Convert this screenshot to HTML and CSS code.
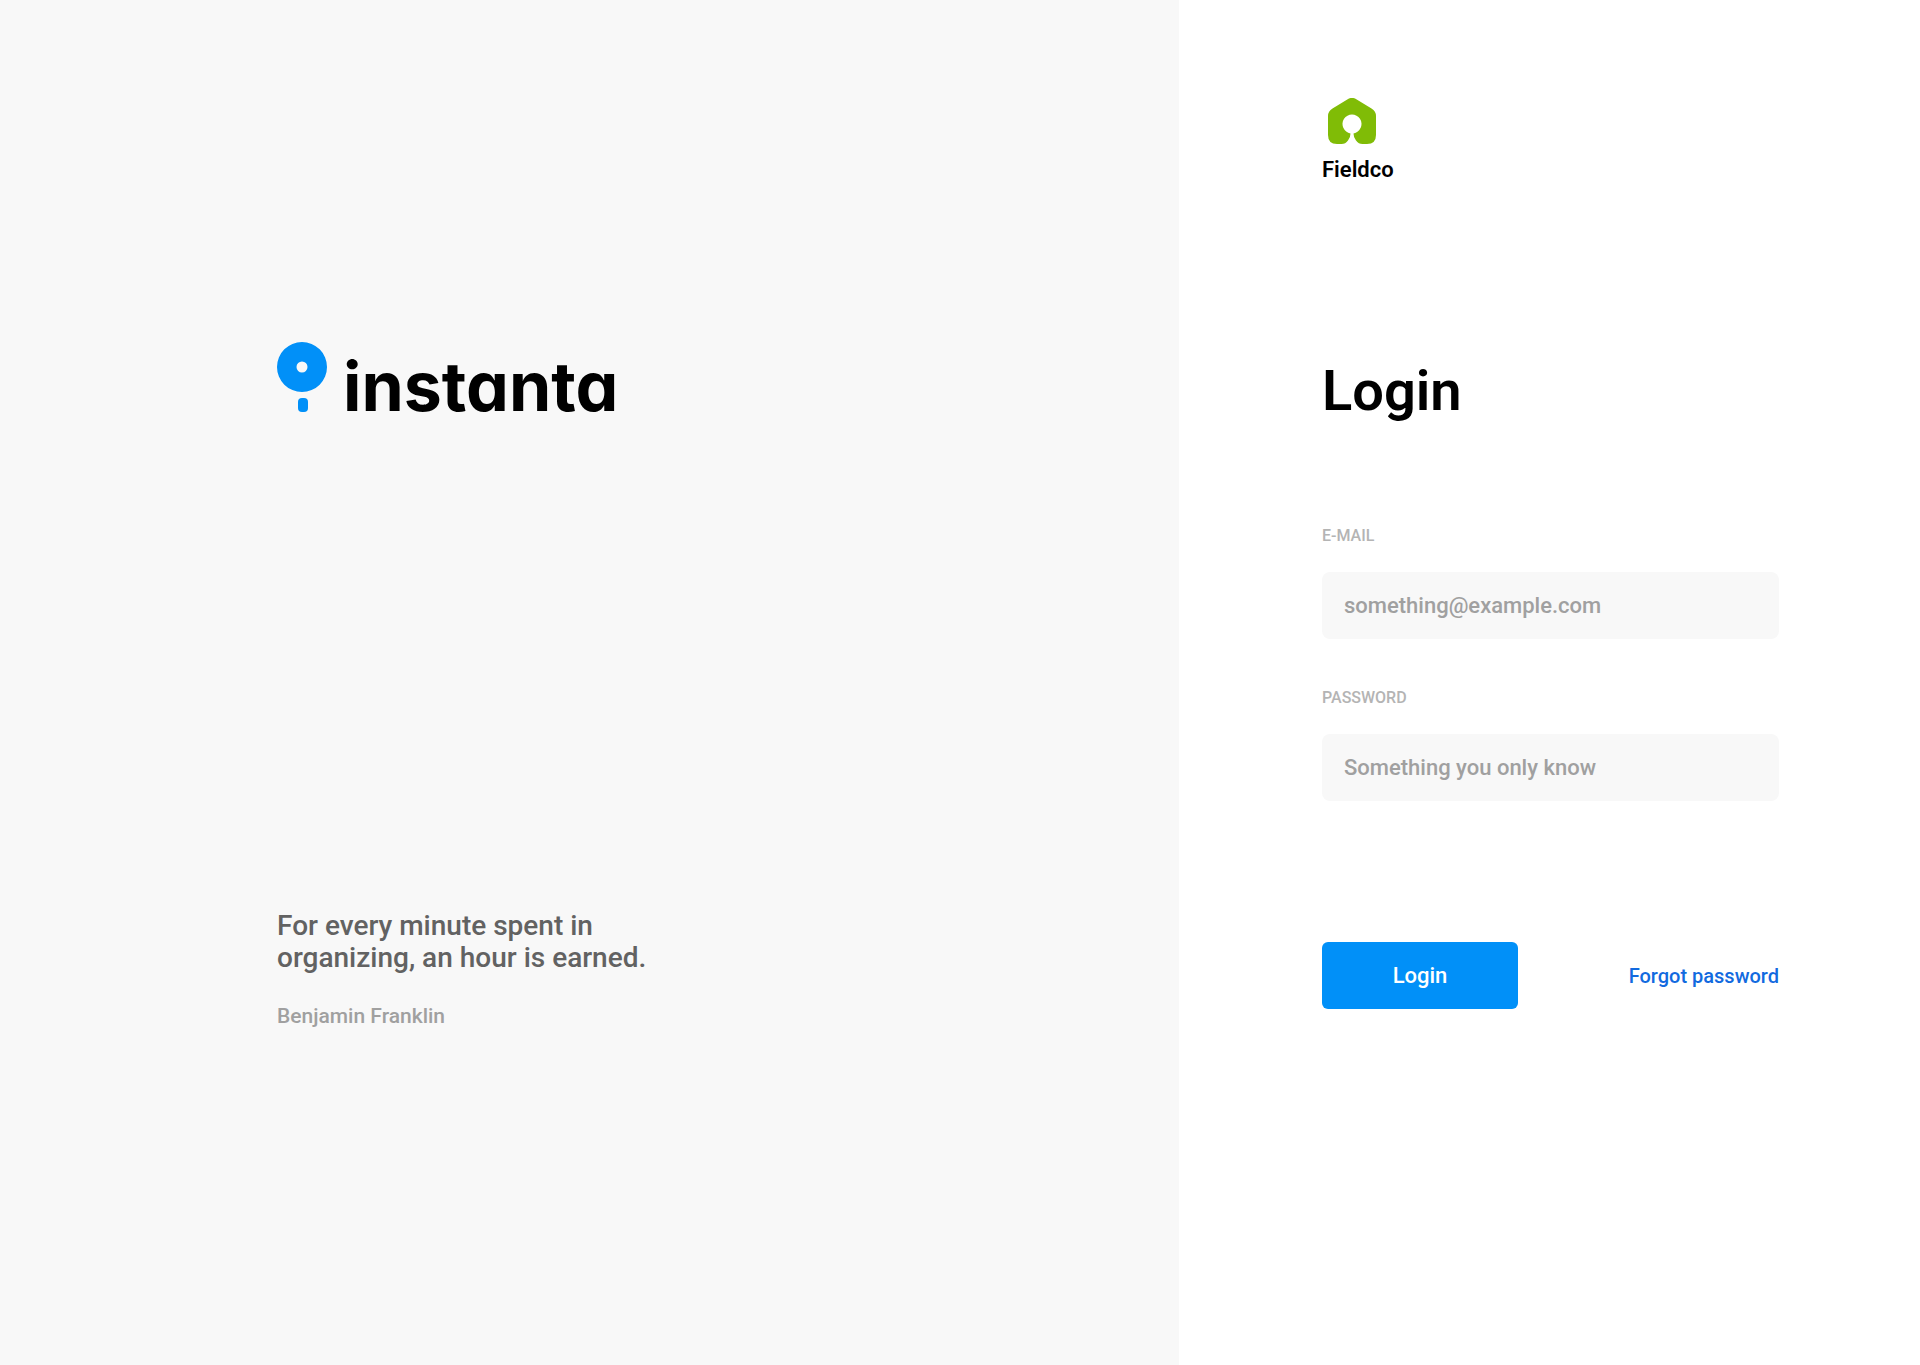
FILE: index.html
```html
<!DOCTYPE html>
<html lang="en">
<head>
<meta charset="utf-8">
<meta name="viewport" content="width=device-width, initial-scale=1">
<title>Login – instanta</title>
<link rel="stylesheet" href="styles.css">
</head>
<body>
<div class="page">
  <section class="intro">
    <div class="brand">
      <svg class="brand-mark" viewBox="0 0 50 72" aria-hidden="true">
        <path fill-rule="evenodd" d="M25 0a25 25 0 1 1 0 50a25 25 0 1 1 0-50zM25 19.500a5.500 5.500 0 1 0 0 11a5.500 5.500 0 1 0 0-11z"/>
        <rect x="21" y="56" width="10" height="14" rx="4"/>
      </svg>
      <span class="brand-name">instanta</span>
    </div>
    <figure class="quote">
      <blockquote class="quote-text">For every minute spent in<br>organizing, an hour is earned.</blockquote>
      <figcaption class="quote-author">Benjamin Franklin</figcaption>
    </figure>
  </section>
  <main class="panel">
    <div class="client">
      <svg class="client-mark" viewBox="0 0 48 46" aria-hidden="true">
        <path d="M20.500 .8Q24 -1 27.500 .8L43.500 10.500Q48 13.200 48 18V37Q48 46 39 46H34.500Q30.500 46 28 42.500Q25.500 39.500 25.500 35.400A9.500 9.500 0 1 0 22.500 35.400Q22.500 39.500 20 42.500Q17.500 46 13.500 46H9Q0 46 0 37V18Q0 13.200 4.500 10.500Z"/>
      </svg>
      <span class="client-name">Fieldco</span>
    </div>
    <h1 class="title">Login</h1>
    <form class="form">
      <div class="field">
        <label class="label" for="email">E-MAIL</label>
        <input class="input" id="email" type="email" placeholder="something@example.com">
      </div>
      <div class="field">
        <label class="label" for="password">PASSWORD</label>
        <input class="input" id="password" type="password" placeholder="Something you only know">
      </div>
      <div class="actions">
        <button class="button" type="submit">Login</button>
        <a class="link" href="#">Forgot password</a>
      </div>
    </form>
  </main>
</div>
</body>
</html>
```
FILE: styles.css
```css
* {
  box-sizing: border-box;
}

body {
  margin: 0;
  background: #fff;
  color: #000;
  font-family: Roboto, "Liberation Sans", sans-serif;
  font-weight: 500;
}

.page {
  display: grid;
  grid-template-columns: 1179fr 741fr;
  min-height: 100vh;
}

.intro {
  padding: 342px 32px 64px 277px;
  background: #f8f8f8;
}

.brand {
  display: flex;
  align-items: flex-start;
  gap: 16px;
}

.brand-mark {
  width: 50px;
  height: 72px;
  fill: #0190f8;
}

.brand-name {
  padding-top: 6px;
  font-family: Inter, "Liberation Sans", sans-serif;
  font-feature-settings: "cv11";
  font-size: 68px;
  font-weight: 700;
  line-height: 76px;
}

.quote {
  margin: 486px 0 0;
}

.quote-text {
  margin: 0;
  color: #626262;
  font-size: 28px;
  line-height: 32px;
}

.quote-author {
  margin-top: 30px;
  color: #a0a0a0;
  font-size: 21px;
  line-height: 24px;
}

.panel {
  padding: 98px 141px 64px 143px;
}

.client {
  display: flex;
  flex-direction: column;
  align-items: flex-start;
  gap: 14px;
}

.client-mark {
  width: 48px;
  height: 46px;
  margin-left: 6px;
  fill: #80bc06;
}

.client-name {
  font-size: 22px;
  font-weight: 600;
  line-height: 24px;
}

.title {
  margin: 175px 0 0;
  font-size: 56px;
  font-weight: 600;
  line-height: 68px;
}

.form {
  display: flex;
  flex-direction: column;
  margin-top: 99px;
}

.field {
  display: flex;
  flex-direction: column;
  gap: 24px;
  margin-bottom: 47px;
}

.label {
  color: #b4b4b4;
  font-size: 16px;
  line-height: 24px;
}

.input {
  width: 100%;
  height: 67px;
  padding: 0 22px;
  border: 0;
  border-radius: 8px;
  background: #f8f8f8;
  color: #333;
  font: inherit;
  font-size: 22px;
}

.input::placeholder {
  color: #a0a0a0;
  opacity: 1;
}

.actions {
  display: flex;
  align-items: center;
  justify-content: space-between;
  margin-top: 94px;
}

.button {
  width: 196px;
  height: 67px;
  border: 0;
  border-radius: 6px;
  background: #0190f8;
  color: #fff;
  font: inherit;
  font-size: 22px;
}

.link {
  color: #126adf;
  font-size: 20px;
  line-height: 24px;
  text-decoration: none;
}
```
